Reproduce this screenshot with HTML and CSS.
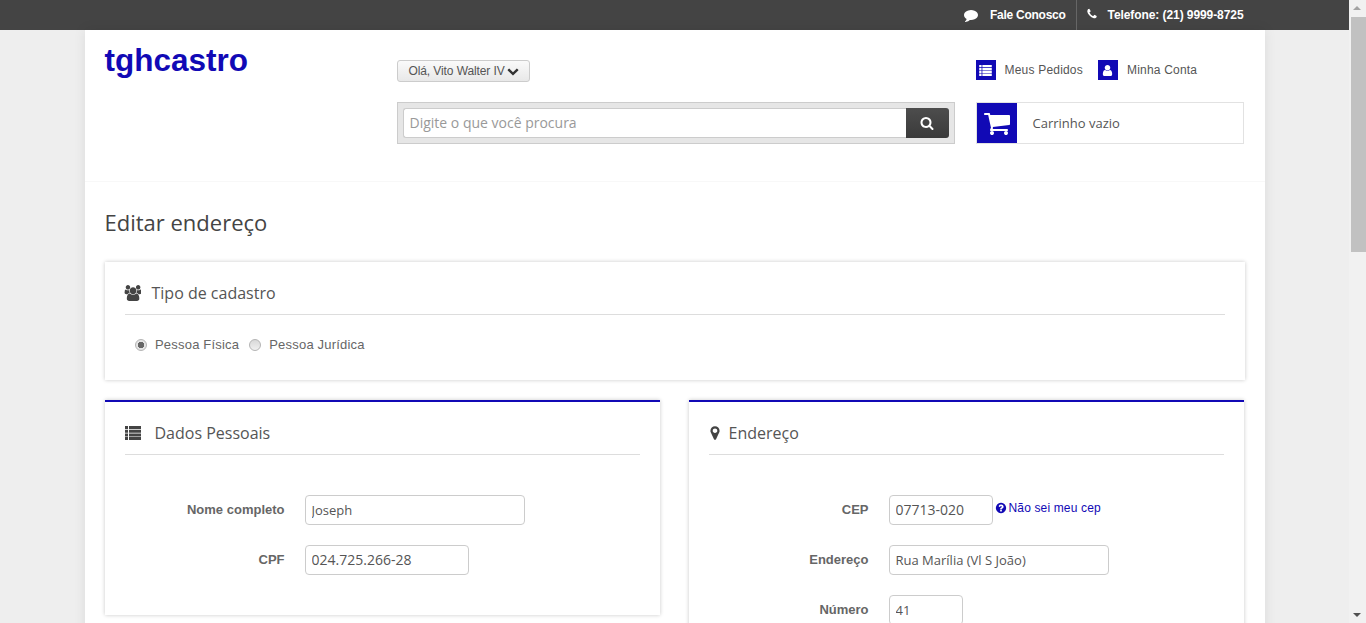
FILE: index.html
```html
<!DOCTYPE html>
<html lang="pt-BR">
<head>
  <meta charset="UTF-8" />
  <title>Editar endereço - tghcastro</title>
  <meta name="viewport" content="width=device-width, initial-scale=1" />
  <link rel="stylesheet" href="styles.css">
</head>
<body>

  <svg class="sprite" aria-hidden="true">
    <defs>
      <symbol id="i-comment" viewBox="0 0 1792 1792"><path d="M1792 896q0 174-120 321.500t-326 233-450 85.500q-70 0-145-8-198 175-460 242-49 14-114 22-17 2-30.500-9t-17.500-29v-1q-3-4-.5-12t2-10 4.500-9.500l6-9 7-8.500 8-9q7-8 31-34.500t34.500-38 31-39.500 32.500-51 27-59 26-76q-157-89-247.500-220t-90.500-281q0-130 71-248.500t191-204.500 286-136.500 348-50.500q244 0 450 85.500t326 233 120 321.500z"/></symbol>
      <symbol id="i-phone" viewBox="0 0 1792 1792"><path d="M1600 1240q0 27-10 70.500t-21 68.500q-21 50-122 106-94 51-186 51-27 0-53-3.500t-57.500-12.500-47-14.500-55.500-20.500-49-18q-98-35-175-83-127-79-264-216t-216-264q-48-77-83-175-3-9-18-49t-20.500-55.500-14.500-47-12.500-57.500-3.500-53q0-92 51-186 56-101 106-122 25-11 68.500-21t70.500-10q14 0 21 3 18 6 53 76 11 19 30 54t35 63.500 31 53.500q3 4 17.500 25t21.500 35.500 7 28.500q0 20-28.500 50t-62 55-62 53-28.500 46q0 9 5 22.500t8.500 20.500 14 24 11.500 19q76 137 174 235t235 174q2 1 19 11.500t24 14 20.500 8.500 22.500 5q18 0 46-28.500t53-62 55-62 50-28.500q14 0 28.500 7t35.500 21.500 25 17.500q25 15 53.500 31t63.500 35 54 30q70 35 76 53 3 7 3 21z"/></symbol>
      <symbol id="i-user" viewBox="0 0 1792 1792"><path d="M1536 1399q0 109-62.500 187t-150.500 78h-854q-88 0-150.500-78t-62.500-187q0-85 8.500-160.500t31.500-152 58.500-131 94-89 134.500-34.500q131 128 313 128t313-128q76 0 134.500 34.500t94 89 58.500 131 31.500 152 8.500 160.500zm-256-887q0 159-112.500 271.500t-271.500 112.500-271.500-112.500-112.500-271.500 112.500-271.500 271.500-112.500 271.500 112.500 112.500 271.500z"/></symbol>
      <symbol id="i-cart" viewBox="0 0 1792 1792"><path d="M704 1536q0 52-38 90t-90 38-90-38-38-90 38-90 90-38 90 38 38 90zm896 0q0 52-38 90t-90 38-90-38-38-90 38-90 90-38 90 38 38 90zm128-1088v512q0 24-16.500 42.500t-40.500 21.500l-1044 122q13 60 13 70 0 16-24 64h920q26 0 45 19t19 45-19 45-45 19h-1024q-26 0-45-19t-19-45q0-11 8-31.500t16-36 21.500-40 15.500-29.500l-177-823h-204q-26 0-45-19t-19-45 19-45 45-19h256q16 0 28.500 6.500t19.500 15.500 13 24.500 8 26 5.500 29.500 4.500 26h1201q26 0 45 19t19 45z"/></symbol>
      <symbol id="i-search" viewBox="0 0 1792 1792"><path d="M1216 832q0-185-131.500-316.500t-316.500-131.500-316.500 131.500-131.500 316.500 131.500 316.500 316.500 131.500 316.500-131.500 131.500-316.500zm512 832q0 52-38 90t-90 38q-54 0-90-38l-343-342q-179 124-399 124-143 0-273.500-55.500t-225-150-150-225-55.500-273.500 55.500-273.500 150-225 225-150 273.500-55.500 273.500 55.500 225 150 150 225 55.500 273.500q0 220-124 399l343 343q37 37 37 90z"/></symbol>
      <symbol id="i-chevron" viewBox="0 0 1792 1792"><path d="M1683 808l-742 741q-19 19-45 19t-45-19l-742-741q-19-19-19-45.500t19-45.500l166-165q19-19 45-19t45 19l531 531 531-531q19-19 45-19t45 19l166 165q19 19 19 45.500t-19 45.500z"/></symbol>
      <symbol id="i-users" viewBox="0 0 1920 1792"><path d="M657 896q-162 5-265 128h-134q-82 0-138-40.500t-56-118.500q0-353 124-353 6 0 43.500 21t97.500 42.500 119 21.500q67 0 133-23-5 37-5 66 0 139 81 256zm1071 637q0 120-73 189.500t-194 69.500h-874q-121 0-194-69.500t-73-189.500q0-53 3.500-103.500t14-109 26.500-108.500 43-97.500 62-81 85.500-53.500 111.500-20q10 0 43 21.500t73 48 107 48 135 21.500 135-21.500 107-48 73-48 43-21.500q61 0 111.500 20t85.500 53.500 62 81 43 97.500 26.500 108.500 14 109 3.500 103.500zm-1024-1277q0 106-75 181t-181 75-181-75-75-181 75-181 181-75 181 75 75 181zm704 384q0 159-112.500 271.500t-271.500 112.500-271.500-112.500-112.500-271.500 112.500-271.500 271.500-112.500 271.500 112.500 112.500 271.500zm576 225q0 78-56 118.500t-138 40.500h-134q-103-123-265-128 81-117 81-256 0-29-5-66 66 23 133 23 59 0 119-21.500t97.500-42.500 43.500-21q124 0 124 353zm-128-609q0 106-75 181t-181 75-181-75-75-181 75-181 181-75 181 75 75 181z"/></symbol>
      <symbol id="i-list" viewBox="0 0 16 14"><path d="M0 0h3v3H0zM4 0h12v3H4zM0 3.700h3v3H0zM4 3.700h12v3H4zM0 7.400h3v3H0zM4 7.400h12v3H4zM0 11h3v3H0zM4 11h12v3H4z"/></symbol>
      <symbol id="i-marker" viewBox="0 0 1792 1792"><path d="M1152 640q0-106-75-181t-181-75-181 75-75 181 75 181 181 75 181-75 75-181zm256 0q0 109-33 179l-364 774q-16 33-47.500 52t-67.500 19-67.500-19-46.500-52l-365-774q-33-70-33-179 0-212 150-362t362-150 362 150 150 362z"/></symbol>
      <symbol id="i-help" viewBox="0 0 1792 1792"><path d="M1024 1376v-192q0-14-9-23t-23-9h-192q-14 0-23 9t-9 23v192q0 14 9 23t23 9h192q14 0 23-9t9-23zm256-672q0-88-55.500-163t-138.500-116-170-41q-243 0-371 213-15 24 8 42l132 100q7 6 19 6 16 0 25-12 53-68 86-92 34-24 86-24 48 0 85.500 26t37.500 59q0 38-20 61t-68 45q-63 28-115.500 86.500t-52.500 125.500v36q0 14 9 23t23 9h192q14 0 23-9t9-23q0-19 21.500-49.500t54.500-49.500q32-18 49-28.500t46-35 44.500-48 28-60.500 12.500-81zm384 192q0 209-103 385.500t-279.500 279.500-385.500 103-385.500-103-279.500-279.500-103-385.500 103-385.500 279.500-279.500 385.500-103 385.500 103 279.500 279.500 103 385.500z"/></symbol>
    </defs>
  </svg>

  <div class="page">
    <div class="topbar">
      <div class="topbar-inner">
        <a class="top-link top-fale" href="#"><svg class="top-icon"><use href="#i-comment"/></svg>Fale Conosco</a>
        <a class="top-link top-tel" href="#"><svg class="top-icon top-icon-phone"><use href="#i-phone"/></svg>Telefone: (21) 9999-8725</a>
      </div>
    </div>

    <div class="container">
      <header class="header">
        <div class="logo">tghcastro</div>

        <div class="header-mid">
          <button class="btn-user" type="button">Olá, Vito Walter IV<svg class="chevron"><use href="#i-chevron"/></svg></button>
          <form class="search">
            <input class="search-input" type="text" placeholder="Digite o que você procura" />
            <button class="search-btn" type="button"><svg class="search-icon"><use href="#i-search"/></svg></button>
          </form>
        </div>

        <div class="header-right">
          <div class="account">
            <a class="account-link" href="#">
              <span class="account-icon"><svg class="icon-list-alt"><use href="#i-list"/></svg></span>Meus Pedidos
            </a>
            <a class="account-link" href="#">
              <span class="account-icon"><svg class="icon-user"><use href="#i-user"/></svg></span>Minha Conta
            </a>
          </div>
          <div class="cart">
            <span class="cart-icon"><svg class="icon-cart"><use href="#i-cart"/></svg></span>
            <span class="cart-text">Carrinho vazio</span>
          </div>
        </div>
      </header>

      <main class="content">
        <h1 class="page-title">Editar endereço</h1>

        <section class="panel panel-tipo">
          <h2 class="panel-title"><svg class="title-icon icon-users"><use href="#i-users"/></svg>Tipo de cadastro</h2>
          <div class="radios">
            <label class="radio"><input type="radio" name="tipo" checked />Pessoa Física</label>
            <label class="radio"><input type="radio" name="tipo" />Pessoa Jurídica</label>
          </div>
        </section>

        <div class="columns">
          <section class="panel panel-form">
            <h2 class="panel-title"><svg class="title-icon icon-list"><use href="#i-list"/></svg>Dados Pessoais</h2>
            <div class="form">
              <div class="row">
                <label class="row-label">Nome completo</label>
                <input class="field field-lg" type="text" value="Joseph" />
              </div>
              <div class="row">
                <label class="row-label">CPF</label>
                <input class="field field-md field-num" type="text" value="024.725.266-28" />
              </div>
            </div>
          </section>

          <section class="panel panel-form">
            <h2 class="panel-title"><svg class="title-icon icon-marker"><use href="#i-marker"/></svg>Endereço</h2>
            <div class="form">
              <div class="row">
                <label class="row-label">CEP</label>
                <input class="field field-sm field-num" type="text" value="07713-020" />
                <a class="help-link" href="#"><svg class="help-icon"><use href="#i-help"/></svg>Não sei meu cep</a>
              </div>
              <div class="row">
                <label class="row-label">Endereço</label>
                <input class="field field-lg" type="text" value="Rua Marília (Vl S João)" />
              </div>
              <div class="row">
                <label class="row-label">Número</label>
                <input class="field field-xs" type="text" value="41" />
              </div>
            </div>
          </section>
        </div>
      </main>
    </div>
  </div>

  <div class="scrollbar">
    <span class="scroll-arrow scroll-up"></span>
    <div class="scroll-track"><div class="scroll-thumb"></div></div>
    <span class="scroll-arrow scroll-down"></span>
  </div>

</body>
</html>
```

FILE: styles.css
```css
* {
  box-sizing: border-box;
}
html, body {
  height: 100%;
}
body {
  margin: 0;
  display: flex;
  overflow: hidden;
  background: #eee;
  color: #444;
  font-family: 'Liberation Sans', Arial, sans-serif;
  font-size: 12px;
}
a {
  color: inherit;
  text-decoration: none;
}
svg {
  fill: currentColor;
  display: block;
}
.sprite {
  display: none;
}
.page {
  flex: 1;
  min-width: 0;
  height: 100%;
  overflow: hidden;
}

/* Barra superior */
.topbar {
  height: 30px;
  background: #444;
  color: #fff;
}
.topbar-inner {
  width: 1180px;
  margin: 0 auto;
  height: 30px;
  padding-right: 21px;
  display: flex;
  justify-content: flex-end;
}
.top-link {
  display: flex;
  align-items: center;
  font-weight: bold;
  font-size: 12px;
  letter-spacing: -0.25px;
}
.top-fale {
  padding-right: 10px;
  border-right: 1px solid #666;
}
.top-tel {
  padding-left: 9px;
  letter-spacing: -0.08px;
}
.top-icon {
  width: 14px;
  height: 14px;
  margin-right: 12px;
}
.top-icon-phone {
  width: 12px;
  height: 12px;
  margin-right: 10px;
  margin-top: -2px;
}

/* Container */
.container {
  width: 1180px;
  margin: 0 auto;
  background: #fff;
  box-shadow: 0 0 12px rgba(0, 0, 0, 0.08);
  min-height: 700px;
}
.header {
  height: 152px;
  padding: 0 21px 0 20px;
  border-bottom: 1px solid #f8f8f8;
  display: flex;
}
.logo {
  width: 292px;
  color: #1109b5;
  font-size: 31.5px;
  font-weight: bold;
  line-height: 37px;
  padding-top: 12px;
}
.header-mid {
  width: 558px;
  padding-top: 30px;
}
.btn-user {
  display: flex;
  align-items: center;
  height: 22px;
  width: 133px;
  padding: 0 0 0 11px;
  border: 1px solid #ccc;
  border-radius: 3px;
  background: linear-gradient(#fafafa, #e8e8e8);
  color: #555;
  font-family: 'Liberation Sans', Arial, sans-serif;
  font-size: 12px;
  letter-spacing: -0.1px;
}
.chevron {
  width: 12px;
  height: 12px;
  margin-left: 2px;
  color: #333;
}
.search {
  display: flex;
  height: 42px;
  margin-top: 20px;
  padding: 5px;
  background: #e6e6e6;
  border: 1px solid #ccc;
}
.search-input {
  flex: 1;
  height: 30px;
  padding: 0 6px 2px;
  border: 1px solid #ccc;
  border-right: 0;
  border-radius: 3px 0 0 3px;
  background: #fff;
  font-family: 'Open Sans', sans-serif;
  font-size: 14px;
  color: #555;
}
.search-input::placeholder {
  color: #999;
}
.search-btn {
  width: 43px;
  height: 30px;
  border: 0;
  padding: 0;
  border-radius: 0 3px 3px 0;
  background: linear-gradient(#4d4d4d, #3a3a3a);
  color: #fff;
  display: flex;
  align-items: center;
  justify-content: center;
}
.search-icon {
  width: 14px;
  height: 14px;
}
.header-right {
  width: 268px;
  margin-left: 21px;
  padding-top: 30px;
}
.account {
  display: flex;
  height: 20px;
  gap: 15px;
}
.account-link {
  display: flex;
  align-items: center;
  color: #555;
  font-size: 12px;
  letter-spacing: 0.2px;
}
.account-icon {
  width: 20px;
  height: 20px;
  margin-right: 9px;
  background: #1109b5;
  color: #fff;
  display: flex;
  align-items: center;
  justify-content: center;
}
.icon-list-alt {
  width: 13px;
  height: 11px;
}
.icon-user {
  width: 13px;
  height: 13px;
}
.cart {
  display: flex;
  align-items: center;
  height: 42px;
  margin-top: 22px;
  border: 1px solid #e2e2e2;
}
.cart-icon {
  width: 40px;
  height: 40px;
  background: #1109b5;
  color: #fff;
  display: flex;
  align-items: center;
  justify-content: center;
}
.icon-cart {
  width: 28px;
  height: 28px;
}
.cart-text {
  margin-left: 16px;
  font-family: 'Open Sans', sans-serif;
  font-size: 13px;
  color: #555;
}

/* Conteudo */
.content {
  padding: 0 20px;
}
.page-title {
  margin: 0;
  height: 80px;
  padding-top: 25px;
  font-family: 'Open Sans', sans-serif;
  font-size: 22px;
  line-height: 30px;
  font-weight: 400;
  color: #444;
}
.panel {
  background: #fff;
  box-shadow: 0 0 4px rgba(0, 0, 0, 0.22);
  padding: 0 20px;
}
.panel-title {
  display: flex;
  align-items: center;
  height: 53px;
  margin: 0;
  padding-top: 10px;
  border-bottom: 1px solid #ddd;
  font-family: 'Open Sans', sans-serif;
  font-size: 16px;
  font-weight: 400;
  color: #555;
}
.panel-tipo {
  height: 118px;
}
.title-icon {
  flex: none;
  color: #444;
}
.icon-users {
  width: 17px;
  height: 16px;
  margin-left: -1px;
  margin-right: 11px;
}
.icon-list {
  width: 16px;
  height: 14px;
  margin-right: 14px;
}
.icon-marker {
  width: 16px;
  height: 16px;
  margin-left: -2px;
  margin-right: 6px;
}
.radios {
  display: flex;
  gap: 9.5px;
  padding: 22px 0 0 10px;
}
.radio {
  display: flex;
  align-items: center;
  gap: 8.5px;
  font-size: 13px;
  color: #666;
  letter-spacing: 0.2px;
}
.radio input {
  appearance: none;
  width: 12px;
  height: 12px;
  margin: 0;
  border: 1px solid #b4b4b4;
  border-radius: 50%;
  background: linear-gradient(#d8d8d8, #f0f0f0);
}
.radio input:checked {
  background: radial-gradient(circle, #666 0 3px, #e4e4e4 3.5px);
}
.columns {
  display: grid;
  grid-template-columns: 555px 555px;
  column-gap: 29px;
  margin-top: 20px;
}
.panel-form {
  height: 215px;
  border-top: 2px solid #1109b5;
}
.panel-form:last-child {
  height: 300px;
}
.form {
  padding-top: 40px;
  display: flex;
  flex-direction: column;
  gap: 20px;
}
.row {
  display: flex;
  align-items: center;
  height: 30px;
}
.row-label {
  width: 160px;
  text-align: right;
  margin-right: 20px;
  margin-top: -2px;
  font-size: 13px;
  font-weight: bold;
  color: #666;
}
.field {
  height: 30px;
  padding: 0 6px;
  border: 1px solid #ccc;
  border-radius: 4px;
  background: #fff;
  font-family: 'Open Sans', sans-serif;
  font-size: 13px;
  color: #555;
}
.field-num {
  padding-bottom: 1px;
  font-size: 14px;
}
.field-lg {
  width: 220px;
}
.field-md {
  width: 164px;
}
.field-sm {
  width: 104px;
}
.field-xs {
  width: 74px;
}
.help-link {
  display: flex;
  align-items: center;
  margin-left: 3px;
  margin-top: -4px;
  color: #1109b5;
  font-size: 12px;
  letter-spacing: 0.15px;
}
.help-icon {
  width: 12px;
  height: 12px;
  margin-left: -1px;
  margin-right: 2px;
}

/* Barra de rolagem */
.scrollbar {
  flex: none;
  width: 17px;
  height: 100%;
  background: #f1f1f1;
  display: flex;
  flex-direction: column;
}
.scroll-arrow {
  height: 17px;
  flex: none;
  position: relative;
}
.scroll-up::before,
.scroll-down::before {
  content: "";
  position: absolute;
  left: 4px;
  border-left: 4px solid transparent;
  border-right: 4px solid transparent;
}
.scroll-up::before {
  top: 6px;
  border-bottom: 4px solid #a3a3a3;
}
.scroll-down::before {
  top: 7px;
  border-top: 4px solid #505050;
}
.scroll-track {
  flex: 1;
}
.scroll-thumb {
  width: 15px;
  height: 235px;
  margin-left: 2px;
  background: #c1c1c1;
}
```
